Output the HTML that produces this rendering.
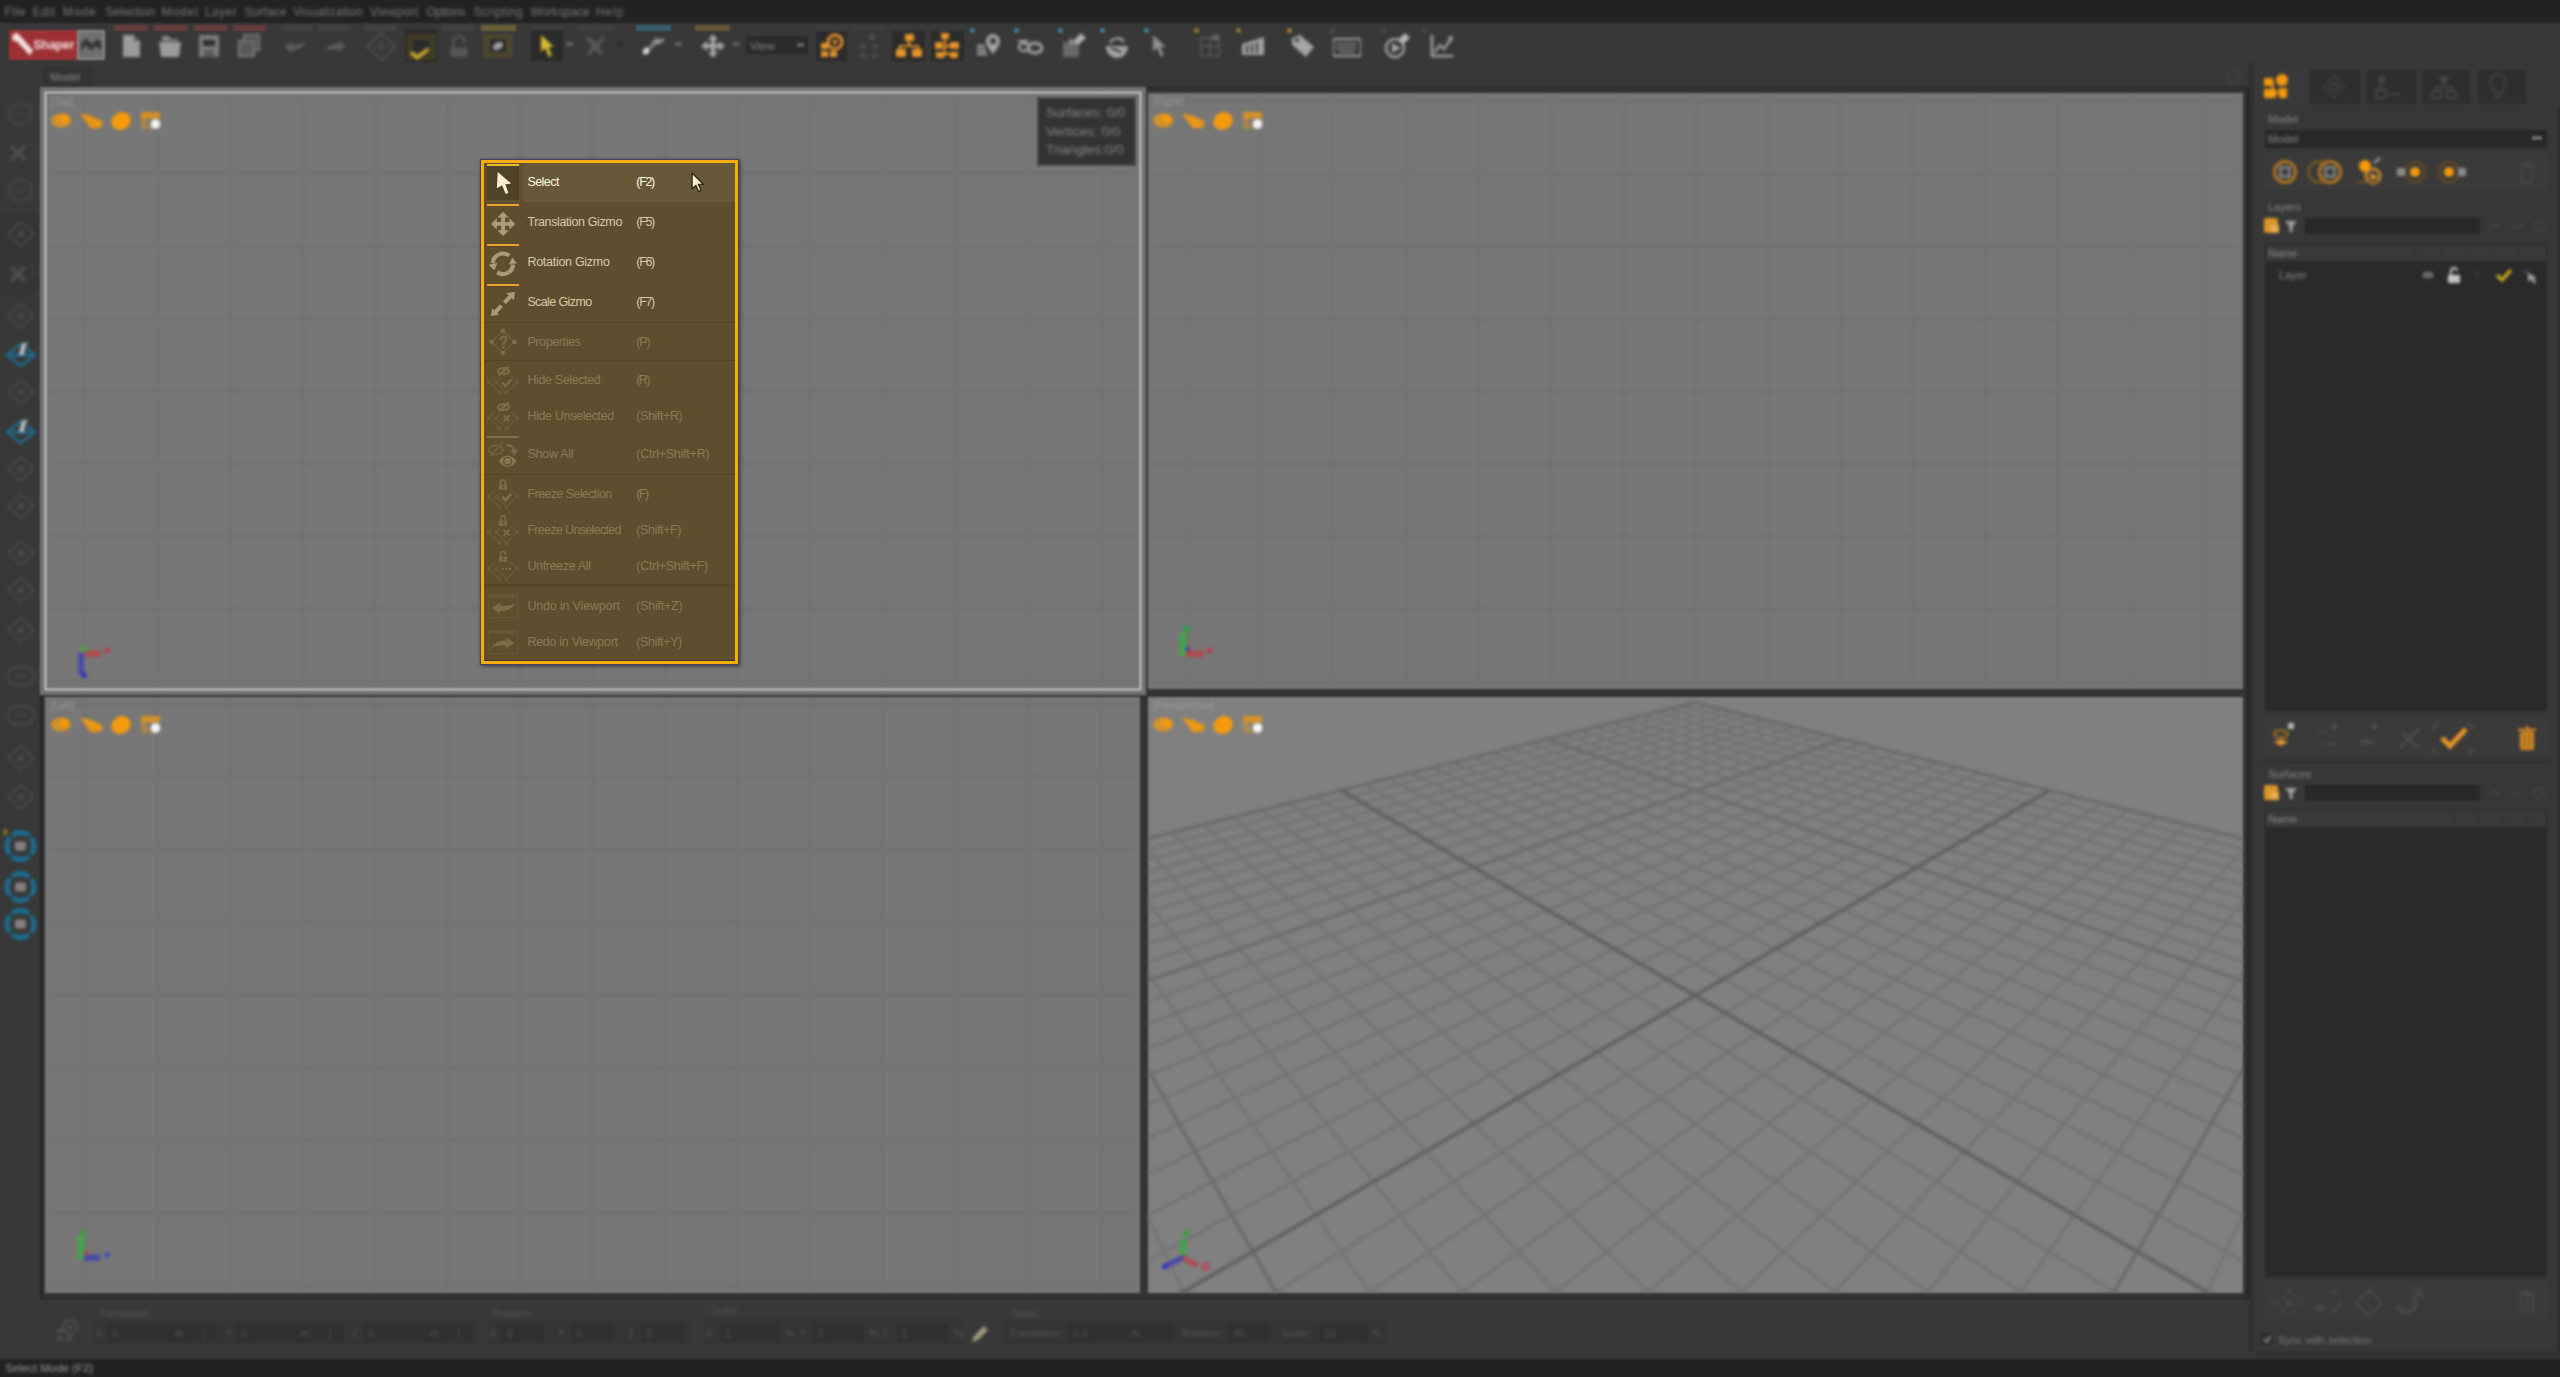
<!DOCTYPE html>
<html><head><meta charset="utf-8"><title>Shaper</title>
<style>
html,body{margin:0;padding:0;background:#383838;overflow:hidden}
body{width:2560px;height:1377px;position:relative;font-family:"Liberation Sans",sans-serif}
.a{position:absolute}
.t{white-space:nowrap}
#bg{position:absolute;left:-40px;top:-40px;width:2640px;height:1457px;background:#383838;filter:blur(1.25px)}
#bg .t{filter:blur(0.8px)}
#bg svg{filter:blur(0.9px)}
#app{position:absolute;left:40px;top:40px;width:2560px;height:1377px}
#fg{position:absolute;left:0;top:0;width:2560px;height:1377px}
</style></head><body>
<div id="bg"><div id="app">
<div class="a" style="left:-40px;top:-40px;width:2640px;height:63px;background:#222222;"></div>
<div class="a" style="left:-40px;top:1359px;width:2640px;height:61px;background:#222222;"></div>
<div class="a t" style="left:4.5px;top:4px;height:16px;line-height:16px;font-size:12px;color:#7a7a7a;letter-spacing:0.5px">File</div>
<div class="a t" style="left:32.6px;top:4px;height:16px;line-height:16px;font-size:12px;color:#7a7a7a;letter-spacing:0.63px">Edit</div>
<div class="a t" style="left:63px;top:4px;height:16px;line-height:16px;font-size:12px;color:#7a7a7a;letter-spacing:0.9px">Mode</div>
<div class="a t" style="left:105.5px;top:4px;height:16px;line-height:16px;font-size:12px;color:#7a7a7a;letter-spacing:0.02px">Selection</div>
<div class="a t" style="left:161.5px;top:4px;height:16px;line-height:16px;font-size:12px;color:#7a7a7a;letter-spacing:0.9px">Model</div>
<div class="a t" style="left:205px;top:4px;height:16px;line-height:16px;font-size:12px;color:#7a7a7a;letter-spacing:0.42px">Layer</div>
<div class="a t" style="left:244.5px;top:4px;height:16px;line-height:16px;font-size:12px;color:#7a7a7a;letter-spacing:0.08px">Surface</div>
<div class="a t" style="left:293px;top:4px;height:16px;line-height:16px;font-size:12px;color:#7a7a7a;letter-spacing:0.21px">Visualization</div>
<div class="a t" style="left:370px;top:4px;height:16px;line-height:16px;font-size:12px;color:#7a7a7a;letter-spacing:0.25px">Viewport</div>
<div class="a t" style="left:426.5px;top:4px;height:16px;line-height:16px;font-size:12px;color:#7a7a7a;letter-spacing:-0.3px">Options</div>
<div class="a t" style="left:473.4px;top:4px;height:16px;line-height:16px;font-size:12px;color:#7a7a7a;letter-spacing:0.31px">Scripting</div>
<div class="a t" style="left:530.5px;top:4px;height:16px;line-height:16px;font-size:12px;color:#7a7a7a;letter-spacing:-0.09px">Workspace</div>
<div class="a t" style="left:596px;top:4px;height:16px;line-height:16px;font-size:12px;color:#7a7a7a;letter-spacing:0.9px">Help</div>
<div class="a t" style="left:5px;top:1359.5px;height:16px;line-height:16px;font-size:11.5px;color:#9a9a9a;">Select Mode (F2)</div>
<div class="a" style="left:9.3px;top:29.7px;width:67.3px;height:30.1px;background:#9e3034;border-radius:2px 0 0 2px"></div>
<div class="a" style="left:76.6px;top:29.7px;width:28px;height:30.1px;background:#8a8a8a;border-radius:0 2px 2px 0"></div>
<div class="a" style="left:78.6px;top:31.7px;width:24px;height:26.1px;background:#707070;"></div>
<div class="a t" style="left:33.6px;top:37.3px;height:16px;line-height:16px;font-size:12.3px;color:#f6e6e6;font-weight:bold;letter-spacing:-0.2px">Shaper</div>
<svg class="a" style="left:9px;top:30px;" width="100" height="32" viewBox="0 0 100 32">
<path d="M3 6 L7 2.5 L11 5.5 L24 20.5 L21 25.5 L8 11.5 L4 10.5 Z" fill="#f4e2e2"/>
<path d="M72 22 L72 14 L77 8 L83 14 L88 9 L92 12 L92 20 L86 16 L82 21 L77 15 Z" fill="#333333"/>
</svg>
<div class="a" style="left:114.3px;top:25px;width:33.4px;height:5.8px;background:#673c3c;"></div>
<div class="a" style="left:153.7px;top:25px;width:33.9px;height:5.8px;background:#673c3c;"></div>
<div class="a" style="left:193.7px;top:25px;width:33.3px;height:5.8px;background:#673c3c;"></div>
<div class="a" style="left:232.5px;top:25px;width:33.9px;height:5.8px;background:#673c3c;"></div>
<div class="a" style="left:280.7px;top:25px;width:31.4px;height:5.8px;background:#424242;"></div>
<div class="a" style="left:318.7px;top:25px;width:32.5px;height:5.8px;background:#424242;"></div>
<div class="a" style="left:363.9px;top:25px;width:33.5px;height:5.8px;background:#424242;"></div>
<div class="a" style="left:441.6px;top:25px;width:32.4px;height:5.8px;background:#424242;"></div>
<div class="a" style="left:480.7px;top:25px;width:35px;height:5.8px;background:#6a6038;"></div>
<div class="a" style="left:532px;top:25px;width:31px;height:5.8px;background:#3e3e3e;"></div>
<div class="a" style="left:578px;top:25px;width:35.8px;height:5.8px;background:#404040;"></div>
<div class="a" style="left:636px;top:25px;width:35.2px;height:5.8px;background:#385d70;"></div>
<div class="a" style="left:695.2px;top:25px;width:35.2px;height:5.8px;background:#67553a;"></div>
<div class="a" style="left:816px;top:25px;width:32px;height:5.8px;background:#3d3d3d;"></div>
<div class="a" style="left:853px;top:25px;width:33px;height:5.8px;background:#3d3d3d;"></div>
<svg class="a" style="left:118px;top:32px;" width="28" height="28" viewBox="0 0 28 28">
<path d="M5 3 H16 L22 9 V25 H5 Z" fill="#9c9c9c"/><path d="M16 3 V9 H22" fill="#5a5a5a"/>
</svg>
<svg class="a" style="left:156px;top:32px;" width="28" height="28" viewBox="0 0 28 28">
<path d="M3 10 H25 L23 25 H5 Z" fill="#9c9c9c"/><path d="M6 4 H13 L15 7 H22 V9 H6 Z" fill="#8a8a8a"/>
</svg>
<svg class="a" style="left:195px;top:32px;" width="28" height="28" viewBox="0 0 28 28">
<path d="M4 3 H24 V25 H4 Z" fill="#7c7c7c"/><rect x="8" y="8" width="12" height="6" fill="#2e2e2e"/><rect x="9" y="18" width="10" height="7" fill="#5a5a5a"/>
</svg>
<svg class="a" style="left:235px;top:32px;" width="28" height="28" viewBox="0 0 28 28">
<rect x="9" y="3" width="15" height="15" fill="#505050" stroke="#707070" stroke-width="2.4"/><rect x="4" y="9" width="15" height="15" fill="#585858" stroke="#747474" stroke-width="2.4"/>
</svg>
<svg class="a" style="left:281px;top:32.4px;" width="28" height="28" viewBox="0 0 28 28">
<path d="M3 15 L11 9.5 V12.5 C16 12.5 21 11.5 25 8.5 C23 15 17 18.5 11 18.5 V21 Z" fill="#5c5c5c"/>
</svg>
<svg class="a" style="left:321px;top:32.4px;" width="28" height="28" viewBox="0 0 28 28">
<path d="M25 14 L17 8.5 V11.5 C12 11.5 7 13.5 3 19.5 C8 17 12 17 17 17.5 V20 Z" fill="#5c5c5c"/>
</svg>
<svg class="a" style="left:364px;top:30px;" width="34" height="34" viewBox="0 0 34 34">
<path d="M17 3 L31 16.5 L17 30 L3 16.5 Z" fill="none" stroke="#4b4b4b" stroke-width="2.4"/><path d="M9 16.5 H25 M17 9 V24" stroke="#484848" stroke-width="2.4"/>
</svg>
<div class="a" style="left:405px;top:29px;width:31.5px;height:32.6px;background:#2b2b2b;"></div>
<div class="a" style="left:406.5px;top:33.7px;width:29.5px;height:26.3px;background:#3f3b27;"></div>
<div class="a" style="left:413.2px;top:40.3px;width:15.7px;height:12.2px;background:#2b2b2b;"></div>
<svg class="a" style="left:405px;top:30px;" width="32" height="32" viewBox="0 0 32 32">
<path d="M6 22.5 L12.2 27.5 L23.4 18.9" fill="none" stroke="#c4a830" stroke-width="3.8"/>
</svg>
<svg class="a" style="left:445px;top:32px;" width="28" height="28" viewBox="0 0 28 28">
<rect x="5.2" y="15.4" width="17.3" height="9.6" fill="#565656"/><path d="M8.5 15 V9.5 A5.5 5.5 0 0 1 19.5 9.5 V12" fill="none" stroke="#565656" stroke-width="2.6"/>
</svg>
<div class="a" style="left:483.2px;top:33.7px;width:29.5px;height:24.3px;background:#4c4630;"></div>
<div class="a" style="left:489.8px;top:39.3px;width:16.2px;height:12.7px;background:#2d2d2d;"></div>
<svg class="a" style="left:484px;top:32px;" width="30" height="28" viewBox="0 0 30 28">
<ellipse cx="14" cy="14" rx="5.5" ry="3.6" fill="#a0a0a0" transform="rotate(-30 14 14)"/>
</svg>
<div class="a" style="left:531px;top:30px;width:32px;height:31px;background:#2b2b2b;"></div>
<svg class="a" style="left:532px;top:32px;" width="28" height="28" viewBox="0 0 28 28">
<path d="M9 3 L9 20 L13 16 L17 25 L20 23.5 L16.5 15 L22 15 Z" fill="#d8bc30"/>
</svg>
<div class="a" style="left:565.7px;top:42.3px;width:7px;height:4px;background:#5a5a5a;"></div>
<svg class="a" style="left:581px;top:32px;" width="28" height="28" viewBox="0 0 28 28">
<path d="M4 6 L8 4 L15 11 L22 4 L24 6 L18 14 L22 22 L20 24 L14 17 L8 24 L6 22 L11 14 Z" fill="#585858"/>
</svg>
<div class="a" style="left:617.3px;top:42.3px;width:7px;height:4px;background:#2d2d2d;"></div>
<svg class="a" style="left:639px;top:32px;" width="28" height="28" viewBox="0 0 28 28">
<path d="M4 22 C3 17 7 14 10 16 C12 18 10 24 4 22 Z" fill="#d8d8d8"/><path d="M10 15 L17 5 L20 7 L13 17 Z" fill="#8a8a8a"/><path d="M16 10 L24 6 L25 9 L18 13 Z" fill="#a0a0a0"/>
</svg>
<div class="a" style="left:674.7px;top:42.3px;width:7px;height:4px;background:#5a5a5a;"></div>
<svg class="a" style="left:698.5px;top:32px;" width="28" height="28" viewBox="0 0 28 28">
<path d="M14 2 L19 8 H16 V12 H20 V9 L26 14 L20 19 V16 H16 V20 H19 L14 26 L9 20 H12 V16 H8 V19 L2 14 L8 9 V12 H12 V8 H9 Z" fill="#a6a6a6"/>
</svg>
<div class="a" style="left:733.4px;top:42.3px;width:7px;height:4px;background:#5a5a5a;"></div>
<div class="a" style="left:745.7px;top:36px;width:62.7px;height:18px;background:#2b2b2b;"></div>
<div class="a t" style="left:750px;top:37.5px;height:16px;line-height:16px;font-size:11.5px;color:#8a8a8a;">View</div>
<div class="a" style="left:796.5px;top:42.5px;width:7px;height:4px;background:#606060;"></div>
<div class="a" style="left:816px;top:31px;width:31px;height:30px;background:#2b2b2b;"></div>
<svg class="a" style="left:817.5px;top:32px;" width="28" height="28" viewBox="0 0 28 28">
<circle cx="17" cy="10" r="7" fill="none" stroke="#e8962a" stroke-width="3"/><path d="M14 8 L20 8 L17 14 Z" fill="#e8962a"/><rect x="3" y="11" width="7" height="6" fill="#e8962a"/><rect x="3" y="19" width="7" height="6" fill="#e8962a"/><rect x="12" y="19" width="7" height="6" fill="#e8962a"/>
</svg>
<svg class="a" style="left:855px;top:32px;" width="28" height="28" viewBox="0 0 28 28">
<rect x="14" y="3" width="6" height="5" fill="#505050"/><rect x="5" y="12" width="6" height="5" fill="#4a4a4a"/><rect x="17" y="12" width="6" height="5" fill="#4a4a4a"/><rect x="5" y="21" width="6" height="5" fill="#4a4a4a"/><rect x="17" y="21" width="6" height="5" fill="#4a4a4a"/>
</svg>
<div class="a" style="left:892px;top:31px;width:33px;height:30px;background:#2b2b2b;"></div>
<svg class="a" style="left:894.5px;top:32px;" width="28" height="28" viewBox="0 0 28 28">
<rect x="10" y="2" width="9" height="7" fill="#e8962a"/><path d="M14 9 V14 M5 18 V14 H23 V18" fill="none" stroke="#e8962a" stroke-width="2"/><rect x="1" y="17" width="10" height="8" fill="#e8962a"/><rect x="17" y="17" width="10" height="8" fill="#e8962a"/>
</svg>
<div class="a" style="left:931px;top:31px;width:33px;height:30px;background:#2b2b2b;"></div>
<svg class="a" style="left:933px;top:32px;" width="28" height="28" viewBox="0 0 28 28">
<rect x="8" y="1" width="8" height="6" fill="#e8962a"/><path d="M12 7 V24 M12 14 H20 M12 22 H20" fill="none" stroke="#e8962a" stroke-width="2"/><rect x="2" y="10" width="8" height="7" fill="#e8962a"/><rect x="17" y="10" width="9" height="7" fill="#e8962a"/><rect x="3" y="20" width="8" height="6" fill="#e8962a"/><rect x="17" y="20" width="8" height="6" fill="#e8962a"/>
</svg>
<div class="a" style="left:969.5px;top:27.5px;width:5px;height:5px;background:#3d7f9c;opacity:0.8"></div>
<div class="a" style="left:1013.5px;top:27.5px;width:5px;height:5px;background:#3d7f9c;opacity:0.8"></div>
<div class="a" style="left:1057.5px;top:27.5px;width:5px;height:5px;background:#3d7f9c;opacity:0.8"></div>
<div class="a" style="left:1099.5px;top:27.5px;width:5px;height:5px;background:#3d7f9c;opacity:0.8"></div>
<div class="a" style="left:1143.5px;top:27.5px;width:5px;height:5px;background:#3d7f9c;opacity:0.8"></div>
<div class="a" style="left:1193.5px;top:27.5px;width:5px;height:5px;background:#8a7a2e;opacity:0.8"></div>
<div class="a" style="left:1235.5px;top:27.5px;width:5px;height:5px;background:#8a7a2e;opacity:0.8"></div>
<div class="a" style="left:1286.5px;top:27.5px;width:5px;height:5px;background:#a87a30;opacity:0.8"></div>
<div class="a" style="left:1329.5px;top:27.5px;width:5px;height:5px;background:#4a4a4a;opacity:0.8"></div>
<div class="a" style="left:1380.5px;top:27.5px;width:5px;height:5px;background:#4a4a4a;opacity:0.8"></div>
<div class="a" style="left:1421.5px;top:27.5px;width:5px;height:5px;background:#4a4a4a;opacity:0.8"></div>
<svg class="a" style="left:975px;top:32px;" width="28" height="28" viewBox="0 0 28 28">
<path d="M18 2 A7 7 0 0 1 25 9 C25 14 18 22 18 22 C18 22 11 14 11 9 A7 7 0 0 1 18 2 Z" fill="#a4a4a4"/><circle cx="18" cy="9" r="3" fill="#373737"/><path d="M2 14 H10 M2 18 H11 M2 22 H12" stroke="#a4a4a4" stroke-width="2.4"/>
</svg>
<svg class="a" style="left:1016px;top:33px;" width="28" height="28" viewBox="0 0 28 28">
<ellipse cx="19" cy="15" rx="7" ry="5" fill="none" stroke="#a4a4a4" stroke-width="3"/><ellipse cx="8" cy="14" rx="5" ry="4" fill="none" stroke="#a4a4a4" stroke-width="2.6"/><path d="M2 8 H12" stroke="#a4a4a4" stroke-width="2"/>
</svg>
<svg class="a" style="left:1060px;top:32px;" width="28" height="28" viewBox="0 0 28 28">
<rect x="3" y="10" width="16" height="15" fill="#6a6a6a"/><path d="M13 9 L21 1 L26 6 L18 13 Z" fill="#b0b0b0"/><path d="M9 5 L15 11 L10 13 Z" fill="#9a9a9a"/>
</svg>
<svg class="a" style="left:1103px;top:33px;" width="28" height="28" viewBox="0 0 28 28">
<path d="M3 13 H25 C25 20 20 25 14 25 C8 25 3 20 3 13 Z" fill="#a4a4a4"/><path d="M7 10 C10 4 18 4 21 9" fill="none" stroke="#a4a4a4" stroke-width="2.5"/><path d="M8 15 L18 19" stroke="#373737" stroke-width="2"/>
</svg>
<svg class="a" style="left:1144px;top:32px;" width="28" height="28" viewBox="0 0 28 28">
<path d="M9 3 L9 20 L13 16 L17 25 L20 23.5 L16.5 15 L22 15 Z" fill="#8e8e8e"/>
</svg>
<svg class="a" style="left:1196px;top:32px;" width="28" height="28" viewBox="0 0 28 28">
<rect x="5" y="6" width="18" height="18" fill="none" stroke="#555" stroke-width="2"/><path d="M5 14 H23 M14 6 V24" stroke="#555" stroke-width="2"/><rect x="16" y="3" width="7" height="5" fill="#6a6a6a"/>
</svg>
<svg class="a" style="left:1239px;top:32px;" width="28" height="28" viewBox="0 0 28 28">
<path d="M3 12 L25 5 V23 H3 Z" fill="#a4a4a4"/><path d="M8 13 V21 M13 12 V21 M18 10 V21" stroke="#373737" stroke-width="2"/>
</svg>
<svg class="a" style="left:1289px;top:32px;" width="28" height="28" viewBox="0 0 28 28">
<path d="M3 6 L11 3 L25 15 L17 25 L3 13 Z" fill="#a4a4a4"/><circle cx="8" cy="8" r="2" fill="#373737"/>
</svg>
<svg class="a" style="left:1333px;top:33px;" width="28" height="28" viewBox="0 0 28 28">
<rect x="0" y="6" width="28" height="17" rx="2" fill="none" stroke="#a4a4a4" stroke-width="2.2"/><path d="M4 11 H24 M4 15 H24 M7 19 H21" stroke="#a4a4a4" stroke-width="2" stroke-dasharray="2.5 1.5"/>
</svg>
<svg class="a" style="left:1383px;top:32px;" width="28" height="28" viewBox="0 0 28 28">
<circle cx="12" cy="16" r="9" fill="none" stroke="#a4a4a4" stroke-width="2.6"/><path d="M9 11 L18 16 L9 21 Z" fill="#a4a4a4"/><path d="M15 8 L22 1 L27 6 L20 12 Z" fill="#b8b8b8"/>
</svg>
<svg class="a" style="left:1427px;top:32px;" width="28" height="28" viewBox="0 0 28 28">
<path d="M5 3 V24 H26" fill="none" stroke="#a4a4a4" stroke-width="2.6"/><path d="M8 20 L13 13 L17 17 L24 7" fill="none" stroke="#a4a4a4" stroke-width="2.2"/><path d="M20 5 L26 4 L25 10 Z" fill="#a4a4a4"/>
</svg>
<div class="a" style="left:42px;top:67px;width:52px;height:21px;background:#333333;"></div>
<div class="a t" style="left:50px;top:68.5px;height:16px;line-height:16px;font-size:11px;color:#8c8c8c;">Model</div>
<svg class="a" style="left:2224px;top:67px;" width="20" height="20" viewBox="0 0 20 20">
<circle cx="10" cy="10" r="6" fill="none" stroke="#414141" stroke-width="2.5"/>
</svg>
<div class="a" style="left:0px;top:214px;width:39px;height:80px;background:#353535;"></div>
<svg class="a" style="left:3px;top:96px;" width="36" height="34" viewBox="0 0 36 34">
<path d="M6 12 L16 6 L28 10 L28 24 L16 29 L6 24 Z" fill="none" stroke="#484848" stroke-width="2"/><path d="M6 18 H28 M12 9 V27 M20 8 V28" stroke="#424242" stroke-width="1.6"/>
</svg>
<svg class="a" style="left:3px;top:173px;" width="36" height="34" viewBox="0 0 36 34">
<path d="M6 12 L16 6 L28 10 L28 24 L16 29 L6 24 Z" fill="none" stroke="#484848" stroke-width="2"/><path d="M6 18 H28 M12 9 V27 M20 8 V28" stroke="#424242" stroke-width="1.6"/>
</svg>
<svg class="a" style="left:3px;top:136px;" width="36" height="34" viewBox="0 0 36 34">
<path d="M8 10 L22 24 M22 10 L8 24" stroke="#4e4e4e" stroke-width="4"/><path d="M25 9 H31 M28 17 H32" stroke="#444" stroke-width="2"/>
</svg>
<svg class="a" style="left:3px;top:257px;" width="36" height="34" viewBox="0 0 36 34">
<path d="M8 10 L22 24 M22 10 L8 24" stroke="#4e4e4e" stroke-width="4"/><path d="M25 9 H31 M28 17 H32" stroke="#444" stroke-width="2"/>
</svg>
<svg class="a" style="left:3px;top:217px;" width="36" height="34" viewBox="0 0 36 34">
<path d="M18 5 L31 17 L18 29 L5 17 Z" fill="none" stroke="#484848" stroke-width="2.2"/><circle cx="18" cy="17" r="3.5" fill="#484848"/>
</svg>
<svg class="a" style="left:3px;top:299px;" width="36" height="34" viewBox="0 0 36 34">
<path d="M18 5 L31 17 L18 29 L5 17 Z" fill="none" stroke="#484848" stroke-width="2.2"/><circle cx="18" cy="17" r="3.5" fill="#484848"/>
</svg>
<svg class="a" style="left:3px;top:375px;" width="36" height="34" viewBox="0 0 36 34">
<path d="M18 5 L31 17 L18 29 L5 17 Z" fill="none" stroke="#484848" stroke-width="2.2"/><circle cx="18" cy="17" r="3.5" fill="#484848"/>
</svg>
<svg class="a" style="left:3px;top:452px;" width="36" height="34" viewBox="0 0 36 34">
<path d="M18 5 L31 17 L18 29 L5 17 Z" fill="none" stroke="#484848" stroke-width="2.2"/><circle cx="18" cy="17" r="3.5" fill="#484848"/>
</svg>
<svg class="a" style="left:3px;top:489px;" width="36" height="34" viewBox="0 0 36 34">
<path d="M18 5 L31 17 L18 29 L5 17 Z" fill="none" stroke="#484848" stroke-width="2.2"/><circle cx="18" cy="17" r="3.5" fill="#484848"/>
</svg>
<svg class="a" style="left:3px;top:536px;" width="36" height="34" viewBox="0 0 36 34">
<path d="M18 5 L31 17 L18 29 L5 17 Z" fill="none" stroke="#484848" stroke-width="2.2"/><circle cx="18" cy="17" r="3.5" fill="#484848"/>
</svg>
<svg class="a" style="left:3px;top:573px;" width="36" height="34" viewBox="0 0 36 34">
<path d="M18 5 L31 17 L18 29 L5 17 Z" fill="none" stroke="#484848" stroke-width="2.2"/><circle cx="18" cy="17" r="3.5" fill="#484848"/>
</svg>
<svg class="a" style="left:3px;top:613px;" width="36" height="34" viewBox="0 0 36 34">
<path d="M18 5 L31 17 L18 29 L5 17 Z" fill="none" stroke="#484848" stroke-width="2.2"/><circle cx="18" cy="17" r="3.5" fill="#484848"/>
</svg>
<svg class="a" style="left:3px;top:741px;" width="36" height="34" viewBox="0 0 36 34">
<path d="M18 5 L31 17 L18 29 L5 17 Z" fill="none" stroke="#484848" stroke-width="2.2"/><circle cx="18" cy="17" r="3.5" fill="#484848"/>
</svg>
<svg class="a" style="left:3px;top:780px;" width="36" height="34" viewBox="0 0 36 34">
<path d="M18 5 L31 17 L18 29 L5 17 Z" fill="none" stroke="#484848" stroke-width="2.2"/><circle cx="18" cy="17" r="3.5" fill="#484848"/>
</svg>
<svg class="a" style="left:3px;top:659px;" width="36" height="34" viewBox="0 0 36 34">
<path d="M3 17 L10 8 H26 L33 17 L26 26 H10 Z" fill="none" stroke="#484848" stroke-width="2.2"/><path d="M12 17 H24" stroke="#484848" stroke-width="2"/>
</svg>
<svg class="a" style="left:3px;top:698px;" width="36" height="34" viewBox="0 0 36 34">
<path d="M3 17 L10 8 H26 L33 17 L26 26 H10 Z" fill="none" stroke="#484848" stroke-width="2.2"/><path d="M12 17 H24" stroke="#484848" stroke-width="2"/>
</svg>
<svg class="a" style="left:3px;top:338px;" width="36" height="34" viewBox="0 0 36 34">
<path d="M18 6 L32 17 L18 28 L4 17 Z" fill="none" stroke="#1f6f92" stroke-width="2.4"/><path d="M8 17 H28" stroke="#1f6f92" stroke-width="3"/><path d="M16 17 L19 6 L25 4 L22 9 L21 17 Z" fill="#c4c4c4"/>
</svg>
<svg class="a" style="left:3px;top:415px;" width="36" height="34" viewBox="0 0 36 34">
<path d="M18 6 L32 17 L18 28 L4 17 Z" fill="none" stroke="#1f6f92" stroke-width="2.4"/><path d="M8 17 H28" stroke="#1f6f92" stroke-width="3"/><path d="M16 17 L19 6 L25 4 L22 9 L21 17 Z" fill="#c4c4c4"/>
</svg>
<svg class="a" style="left:3px;top:829px;" width="36" height="34" viewBox="0 0 36 34">
<circle cx="17.5" cy="17" r="13.5" fill="none" stroke="#1c6e92" stroke-width="4.8" stroke-dasharray="18.4 2.8" stroke-dashoffset="9.2"/><rect x="12" y="12.5" width="11" height="9" rx="2" fill="#828282"/>
</svg>
<svg class="a" style="left:3px;top:869.5px;" width="36" height="34" viewBox="0 0 36 34">
<circle cx="17.5" cy="17" r="13.5" fill="none" stroke="#1c6e92" stroke-width="4.8" stroke-dasharray="18.4 2.8" stroke-dashoffset="9.2"/><rect x="12" y="12.5" width="11" height="9" rx="2" fill="#828282"/>
</svg>
<svg class="a" style="left:3px;top:907px;" width="36" height="34" viewBox="0 0 36 34">
<circle cx="17.5" cy="17" r="13.5" fill="none" stroke="#1c6e92" stroke-width="4.8" stroke-dasharray="18.4 2.8" stroke-dashoffset="9.2"/><rect x="12" y="12.5" width="11" height="9" rx="2" fill="#828282"/>
</svg>
<div class="a" style="left:3px;top:829px;width:5px;height:6px;background:#6e6420;"></div>
<div class="a" style="left:40px;top:86.7px;width:2208.7px;height:1212.6px;background:#222222;"></div>
<div class="a" style="left:41.5px;top:88.2px;width:2205.7px;height:1209.6px;background:#333333;"></div>
<div class="a" style="left:39.5px;top:86.5px;width:1106.5px;height:608.7px;background:#757575;"></div>
<div class="a" style="left:45px;top:92px;width:1096px;height:598px;background:#ffffff;"></div>
<div class="a" style="left:46px;top:93px;width:1094px;height:596px;background:#777777;"></div>
<div class="a" style="left:1147.5px;top:92.5px;width:1095.3px;height:596.9px;background:#777777;"></div>
<div class="a" style="left:45.3px;top:696.5px;width:1095.1px;height:596.3px;background:#777777;"></div>
<div class="a" style="left:1147.5px;top:696.5px;width:1095.3px;height:596.3px;background:#808080;"></div>
<svg class="a" style="left:46px;top:93px;" width="1094" height="596" viewBox="0 0 1094 596">
<path d="M547.0 3 V593 M619.6 3 V593 M474.4 3 V593 M692.2 3 V593 M401.8 3 V593 M764.8 3 V593 M329.2 3 V593 M837.4 3 V593 M256.6 3 V593 M910.0 3 V593 M184.0 3 V593 M982.6 3 V593 M111.4 3 V593 M1055.2 3 V593 M38.8 3 V593 M3 298.0 H1091 M3 370.6 H1091 M3 225.4 H1091 M3 443.2 H1091 M3 152.8 H1091 M3 515.8 H1091 M3 80.2 H1091 M3 588.4 H1091 M3 7.6 H1091 " stroke="#737373" stroke-width="4" fill="none"/>
</svg>
<svg class="a" style="left:1147.5px;top:92.5px;" width="1095.3" height="596.9" viewBox="0 0 1095.3 596.9">
<path d="M547.7 3 V593.9 M620.2 3 V593.9 M475.1 3 V593.9 M692.9 3 V593.9 M402.5 3 V593.9 M765.5 3 V593.9 M329.9 3 V593.9 M838.1 3 V593.9 M257.2 3 V593.9 M910.7 3 V593.9 M184.7 3 V593.9 M983.2 3 V593.9 M112.1 3 V593.9 M1055.8 3 V593.9 M39.5 3 V593.9 M3 298.4 H1092.3 M3 371.0 H1092.3 M3 225.9 H1092.3 M3 443.6 H1092.3 M3 153.2 H1092.3 M3 516.2 H1092.3 M3 80.7 H1092.3 M3 588.8 H1092.3 M3 8.1 H1092.3 " stroke="#737373" stroke-width="4" fill="none"/>
</svg>
<svg class="a" style="left:45.3px;top:696.5px;" width="1095.1" height="596.3" viewBox="0 0 1095.1 596.3">
<path d="M547.6 3 V593.3 M620.2 3 V593.3 M474.9 3 V593.3 M692.8 3 V593.3 M402.4 3 V593.3 M765.4 3 V593.3 M329.8 3 V593.3 M838.0 3 V593.3 M257.2 3 V593.3 M910.6 3 V593.3 M184.6 3 V593.3 M983.2 3 V593.3 M112.0 3 V593.3 M1055.8 3 V593.3 M39.4 3 V593.3 M3 298.1 H1092.1 M3 370.8 H1092.1 M3 225.5 H1092.1 M3 443.3 H1092.1 M3 153.0 H1092.1 M3 516.0 H1092.1 M3 80.4 H1092.1 M3 588.5 H1092.1 M3 7.8 H1092.1 " stroke="#737373" stroke-width="4" fill="none"/>
</svg>
<svg class="a" style="left:1147.5px;top:696.5px;overflow:hidden" width="1095.3" height="596.3" viewBox="0 0 1095.3 596.3">
<path d="M-2297.9 4060.2 L-566.3 282.0 M3392.1 4060.2 L1660.5 282.0 M-1806.2 4060.2 L-503.9 266.5 M2900.4 4060.2 L1598.1 266.5 M-1314.6 4060.2 L-445.3 251.9 M2408.8 4060.2 L1539.5 251.9 M-822.9 4060.2 L-390.1 238.2 M1917.1 4060.2 L1484.3 238.2 M-331.2 4060.2 L-338.0 225.3 M1425.4 4060.2 L1432.2 225.3 M160.5 4060.2 L-288.9 213.1 M933.7 4060.2 L1383.1 213.1 M652.2 4060.2 L-242.4 201.5 M442.0 4060.2 L1336.6 201.5 M1143.8 4060.2 L-198.3 190.6 M-49.6 4060.2 L1292.5 190.6 M1635.5 4060.2 L-156.5 180.2 M-541.3 4060.2 L1250.7 180.2 M2618.9 4060.2 L-79.1 161.0 M-1524.7 4060.2 L1173.3 161.0 M3110.5 4060.2 L-43.1 152.0 M-2016.3 4060.2 L1137.3 152.0 M3602.2 4060.2 L-8.8 143.5 M-2508.0 4060.2 L1103.0 143.5 M3624.0 3607.0 L24.0 135.4 M-2529.8 3607.0 L1070.2 135.4 M3188.5 2847.4 L55.3 127.6 M-2094.3 2847.4 L1038.9 127.6 M2897.4 2339.8 L85.2 120.2 M-1803.2 2339.8 L1009.0 120.2 M2689.1 1976.5 L113.8 113.1 M-1594.9 1976.5 L980.4 113.1 M2532.7 1703.7 L141.3 106.3 M-1438.5 1703.7 L952.9 106.3 M2411.0 1491.3 L167.7 99.7 M-1316.8 1491.3 L926.5 99.7 M2233.7 1182.0 L217.2 87.4 M-1139.5 1182.0 L877.0 87.4 M2167.1 1065.9 L240.6 81.6 M-1072.9 1065.9 L853.6 81.6 M2110.8 967.7 L263.1 76.0 M-1016.6 967.7 L831.1 76.0 M2062.5 883.4 L284.8 70.7 M-968.3 883.4 L809.4 70.7 M2020.6 810.4 L305.6 65.5 M-926.4 810.4 L788.6 65.5 M1984.0 746.5 L325.7 60.5 M-889.8 746.5 L768.5 60.5 M1951.6 690.0 L345.2 55.7 M-857.4 690.0 L749.0 55.7 M1922.8 639.9 L363.9 51.0 M-828.6 639.9 L730.3 51.0 M1897.1 595.0 L382.0 46.5 M-802.9 595.0 L712.2 46.5 M1853.0 518.0 L416.5 38.0 M-758.8 518.0 L677.7 38.0 M1833.9 484.8 L432.8 33.9 M-739.7 484.8 L661.4 33.9 M1816.5 454.4 L448.7 29.9 M-722.3 454.4 L645.5 29.9 M1800.5 426.6 L464.1 26.1 M-706.3 426.6 L630.1 26.1 M1785.9 401.0 L479.0 22.4 M-691.7 401.0 L615.2 22.4 M1772.3 377.3 L493.4 18.8 M-678.1 377.3 L600.8 18.8 M1759.8 355.4 L507.4 15.4 M-665.6 355.4 L586.8 15.4 M1748.1 335.1 L521.1 12.0 M-653.9 335.1 L573.1 12.0 M1737.3 316.2 L534.3 8.7 M-643.1 316.2 L559.9 8.7 " stroke="#747474" stroke-width="3.2" fill="none"/>
<path d="M-2789.6 4060.2 L-632.9 298.5 M3883.8 4060.2 L1727.1 298.5 M2127.2 4060.2 L-116.8 170.4 M-1033.0 4060.2 L1211.0 170.4 M1873.9 554.6 L399.5 42.2 M-779.7 554.6 L694.7 42.2 M1727.1 298.5 L547.1 5.5 M-632.9 298.5 L547.1 5.5 " stroke="#6c6c6c" stroke-width="3.6" fill="none"/>
<path d="M2313.5 1321.2 L192.9 93.4 M-1219.3 1321.2 L901.3 93.4 " stroke="#616161" stroke-width="3.8" fill="none"/>
</svg>
<div class="a t" style="left:51px;top:93px;height:16px;line-height:16px;font-size:10.5px;color:#9a9a9a;">[Top]</div>
<div class="a t" style="left:1153px;top:93px;height:16px;line-height:16px;font-size:10.5px;color:#9a9a9a;">[Right]</div>
<div class="a t" style="left:51px;top:697px;height:16px;line-height:16px;font-size:10.5px;color:#9a9a9a;">[Left]</div>
<div class="a t" style="left:1153px;top:697px;height:16px;line-height:16px;font-size:10.5px;color:#9a9a9a;">[Perspective]</div>
<svg class="a" style="left:49px;top:107.5px;" width="120" height="26" viewBox="0 0 120 26">
<ellipse cx="12" cy="12.5" rx="10" ry="7" fill="#f59a0c" opacity="0.75"/><ellipse cx="16" cy="10.5" rx="4" ry="4.6" fill="#f59a0c" transform="rotate(-25 16 10.5)"/>
<path d="M31 5.5 L41 7.5 L54 13.5 L52 19.5 L42 20.5 L37 14 Z" fill="#f59a0c" opacity="0.9"/>
<ellipse cx="72" cy="13" rx="10" ry="8.6" fill="#f59a0c" transform="rotate(-25 72 13)"/>
<rect x="92" y="4" width="19" height="6.5" fill="#f59a0c" opacity="0.75"/><rect x="92" y="10" width="6" height="11" fill="#f59a0c" opacity="0.4"/><rect x="98" y="17" width="6" height="4" fill="#f59a0c" opacity="0.3"/>
<circle cx="106.5" cy="16" r="4.8" fill="#f6f6f6"/>
</svg>
<svg class="a" style="left:1151px;top:107.5px;" width="120" height="26" viewBox="0 0 120 26">
<ellipse cx="12" cy="12.5" rx="10" ry="7" fill="#f59a0c" opacity="0.75"/><ellipse cx="16" cy="10.5" rx="4" ry="4.6" fill="#f59a0c" transform="rotate(-25 16 10.5)"/>
<path d="M31 5.5 L41 7.5 L54 13.5 L52 19.5 L42 20.5 L37 14 Z" fill="#f59a0c" opacity="0.9"/>
<ellipse cx="72" cy="13" rx="10" ry="8.6" fill="#f59a0c" transform="rotate(-25 72 13)"/>
<rect x="92" y="4" width="19" height="6.5" fill="#f59a0c" opacity="0.75"/><rect x="92" y="10" width="6" height="11" fill="#f59a0c" opacity="0.4"/><rect x="98" y="17" width="6" height="4" fill="#f59a0c" opacity="0.3"/>
<circle cx="106.5" cy="16" r="4.8" fill="#f6f6f6"/>
</svg>
<svg class="a" style="left:49px;top:711.5px;" width="120" height="26" viewBox="0 0 120 26">
<ellipse cx="12" cy="12.5" rx="10" ry="7" fill="#f59a0c" opacity="0.75"/><ellipse cx="16" cy="10.5" rx="4" ry="4.6" fill="#f59a0c" transform="rotate(-25 16 10.5)"/>
<path d="M31 5.5 L41 7.5 L54 13.5 L52 19.5 L42 20.5 L37 14 Z" fill="#f59a0c" opacity="0.9"/>
<ellipse cx="72" cy="13" rx="10" ry="8.6" fill="#f59a0c" transform="rotate(-25 72 13)"/>
<rect x="92" y="4" width="19" height="6.5" fill="#f59a0c" opacity="0.75"/><rect x="92" y="10" width="6" height="11" fill="#f59a0c" opacity="0.4"/><rect x="98" y="17" width="6" height="4" fill="#f59a0c" opacity="0.3"/>
<circle cx="106.5" cy="16" r="4.8" fill="#f6f6f6"/>
</svg>
<svg class="a" style="left:1151px;top:711.5px;" width="120" height="26" viewBox="0 0 120 26">
<ellipse cx="12" cy="12.5" rx="10" ry="7" fill="#f59a0c" opacity="0.75"/><ellipse cx="16" cy="10.5" rx="4" ry="4.6" fill="#f59a0c" transform="rotate(-25 16 10.5)"/>
<path d="M31 5.5 L41 7.5 L54 13.5 L52 19.5 L42 20.5 L37 14 Z" fill="#f59a0c" opacity="0.9"/>
<ellipse cx="72" cy="13" rx="10" ry="8.6" fill="#f59a0c" transform="rotate(-25 72 13)"/>
<rect x="92" y="4" width="19" height="6.5" fill="#f59a0c" opacity="0.75"/><rect x="92" y="10" width="6" height="11" fill="#f59a0c" opacity="0.4"/><rect x="98" y="17" width="6" height="4" fill="#f59a0c" opacity="0.3"/>
<circle cx="106.5" cy="16" r="4.8" fill="#f6f6f6"/>
</svg>
<div class="a" style="left:1037px;top:97px;width:99px;height:69px;background:#484848;"></div>
<div class="a" style="left:1039px;top:99px;width:95px;height:65px;background:#333333;"></div>
<div class="a t" style="left:1046px;top:105px;height:16px;line-height:16px;font-size:13.5px;color:#868686;">Surfaces: 0/0</div>
<div class="a t" style="left:1046px;top:123.5px;height:16px;line-height:16px;font-size:13.5px;color:#868686;">Vertices: 0/0</div>
<div class="a t" style="left:1046px;top:141.5px;height:16px;line-height:16px;font-size:13.5px;color:#868686;">Triangles:0/0</div>
<svg class="a" style="left:70px;top:640px;" width="50" height="45" viewBox="0 0 50 45">
<rect x="8" y="13" width="6" height="21" fill="#4a4aa8"/><rect x="14" y="10.5" width="17" height="6.5" fill="#b04a50"/>
<circle cx="14" cy="9" r="3.2" fill="#45a34d"/><circle cx="37.5" cy="10.5" r="2.8" fill="#c03a50"/><circle cx="13.8" cy="35" r="3" fill="#3a3ab8"/>
</svg>
<svg class="a" style="left:1170px;top:620px;" width="50" height="45" viewBox="0 0 50 45">
<rect x="9.5" y="13" width="7" height="23" fill="#45a34d"/><rect x="16" y="30.5" width="18" height="6.5" fill="#b04a50"/>
<circle cx="16.5" cy="9" r="3.2" fill="#35a045"/><circle cx="39.5" cy="30.5" r="2.8" fill="#c03a50"/><circle cx="17.5" cy="29" r="2.2" fill="#4040b0"/>
</svg>
<svg class="a" style="left:70px;top:1225px;" width="50" height="45" viewBox="0 0 50 45">
<rect x="7.5" y="11" width="7" height="23" fill="#45a34d"/><rect x="14" y="29.5" width="16" height="6.5" fill="#4a4aa8"/>
<circle cx="13" cy="7.5" r="3" fill="#35a045"/><circle cx="37" cy="30" r="2.8" fill="#3a50c0"/><circle cx="15.5" cy="28" r="2.2" fill="#c03a50"/>
</svg>
<svg class="a" style="left:1155px;top:1225px;" width="60" height="50" viewBox="0 0 60 50">
<path d="M28.2 32 V14.5" stroke="#45a34d" stroke-width="6.5"/><path d="M28 32.5 L11 40.8" stroke="#4a4aa8" stroke-width="5.4" stroke-linecap="round"/><path d="M28 32.5 L42.5 40.8" stroke="#b04a50" stroke-width="5.4"/>
<circle cx="31.3" cy="8" r="3.2" fill="#35a045"/><circle cx="10" cy="41.5" r="3" fill="#3040c0"/><circle cx="50.5" cy="41.6" r="3" fill="none" stroke="#c03a50" stroke-width="2"/>
</svg>
<svg class="a" style="left:54px;top:1316px;" width="28" height="28" viewBox="0 0 28 28">
<circle cx="16" cy="11" r="7" fill="none" stroke="#4c4c4c" stroke-width="2.4"/><path d="M12 9 H20 L16 15 Z" fill="#4c4c4c"/><rect x="3" y="12" width="6" height="5" fill="#4c4c4c"/><rect x="3" y="20" width="6" height="5" fill="#4c4c4c"/><rect x="12" y="20" width="6" height="5" fill="#4c4c4c"/>
</svg>
<div class="a t" style="left:98px;top:1305px;height:16px;line-height:16px;font-size:10.5px;color:#565656;">Translation</div>
<div class="a" style="left:93px;top:1321px;width:383px;height:24px;background:#343434;"></div>
<div class="a t" style="left:96px;top:1325px;height:16px;line-height:16px;font-size:10.5px;color:#565656;">X</div>
<div class="a" style="left:107px;top:1324px;width:110px;height:18px;background:#303030;"></div>
<div class="a t" style="left:112px;top:1325px;height:16px;line-height:16px;font-size:10.5px;color:#565656;">0</div>
<div class="a t" style="left:175px;top:1325px;height:16px;line-height:16px;font-size:10.5px;color:#565656;">m</div>
<div class="a" style="left:203px;top:1326px;width:2px;height:14px;background:#3a3a3a;"></div>
<div class="a t" style="left:226px;top:1325px;height:16px;line-height:16px;font-size:10.5px;color:#565656;">Y</div>
<div class="a" style="left:236px;top:1324px;width:107px;height:18px;background:#303030;"></div>
<div class="a t" style="left:241px;top:1325px;height:16px;line-height:16px;font-size:10.5px;color:#565656;">0</div>
<div class="a t" style="left:301px;top:1325px;height:16px;line-height:16px;font-size:10.5px;color:#565656;">m</div>
<div class="a" style="left:329px;top:1326px;width:2px;height:14px;background:#3a3a3a;"></div>
<div class="a t" style="left:352px;top:1325px;height:16px;line-height:16px;font-size:10.5px;color:#565656;">Z</div>
<div class="a" style="left:363px;top:1324px;width:109px;height:18px;background:#303030;"></div>
<div class="a t" style="left:368px;top:1325px;height:16px;line-height:16px;font-size:10.5px;color:#565656;">0</div>
<div class="a t" style="left:430px;top:1325px;height:16px;line-height:16px;font-size:10.5px;color:#565656;">m</div>
<div class="a" style="left:458px;top:1326px;width:2px;height:14px;background:#3a3a3a;"></div>
<div class="a t" style="left:492px;top:1305px;height:16px;line-height:16px;font-size:10.5px;color:#565656;">Rotation</div>
<div class="a" style="left:487px;top:1321px;width:203px;height:24px;background:#343434;"></div>
<div class="a t" style="left:490px;top:1325px;height:16px;line-height:16px;font-size:10.5px;color:#565656;">X</div>
<div class="a" style="left:502px;top:1324px;width:41px;height:18px;background:#303030;"></div>
<div class="a t" style="left:507px;top:1325px;height:16px;line-height:16px;font-size:10.5px;color:#565656;">0</div>
<div class="a t" style="left:558px;top:1325px;height:16px;line-height:16px;font-size:10.5px;color:#565656;">Y</div>
<div class="a" style="left:571px;top:1324px;width:42px;height:18px;background:#303030;"></div>
<div class="a t" style="left:576px;top:1325px;height:16px;line-height:16px;font-size:10.5px;color:#565656;">0</div>
<div class="a t" style="left:628px;top:1325px;height:16px;line-height:16px;font-size:10.5px;color:#565656;">Z</div>
<div class="a" style="left:641px;top:1324px;width:43px;height:18px;background:#303030;"></div>
<div class="a t" style="left:646px;top:1325px;height:16px;line-height:16px;font-size:10.5px;color:#565656;">0</div>
<div class="a t" style="left:711px;top:1301.5px;height:16px;line-height:16px;font-size:10.5px;color:#565656;">Scale</div>
<div class="a" style="left:703px;top:1318px;width:259px;height:27px;background:#343434;"></div>
<div class="a t" style="left:706px;top:1325px;height:16px;line-height:16px;font-size:10.5px;color:#565656;">X</div>
<div class="a" style="left:720px;top:1324px;width:59px;height:18px;background:#303030;"></div>
<div class="a t" style="left:725px;top:1325px;height:16px;line-height:16px;font-size:10.5px;color:#565656;">1</div>
<div class="a t" style="left:785px;top:1325px;height:16px;line-height:16px;font-size:10.5px;color:#565656;">%</div>
<div class="a t" style="left:799px;top:1325px;height:16px;line-height:16px;font-size:10.5px;color:#565656;">Y</div>
<div class="a" style="left:813px;top:1324px;width:50px;height:18px;background:#303030;"></div>
<div class="a t" style="left:818px;top:1325px;height:16px;line-height:16px;font-size:10.5px;color:#565656;">1</div>
<div class="a t" style="left:869px;top:1325px;height:16px;line-height:16px;font-size:10.5px;color:#565656;">%</div>
<div class="a t" style="left:882px;top:1325px;height:16px;line-height:16px;font-size:10.5px;color:#565656;">Z</div>
<div class="a" style="left:897px;top:1324px;width:51px;height:18px;background:#303030;"></div>
<div class="a t" style="left:902px;top:1325px;height:16px;line-height:16px;font-size:10.5px;color:#565656;">1</div>
<div class="a t" style="left:954px;top:1325px;height:16px;line-height:16px;font-size:10.5px;color:#565656;">%</div>
<svg class="a" style="left:968px;top:1322px;" width="24" height="24" viewBox="0 0 24 24">
<path d="M4 20 L6 14 L16 4 L20 8 L10 18 Z" fill="#a09880"/>
</svg>
<div class="a t" style="left:1012px;top:1305px;height:16px;line-height:16px;font-size:10.5px;color:#565656;">Steps</div>
<div class="a" style="left:1004px;top:1321px;width:382px;height:24px;background:#343434;"></div>
<div class="a t" style="left:1009px;top:1325px;height:16px;line-height:16px;font-size:10.5px;color:#565656;">Translation:</div>
<div class="a" style="left:1068px;top:1324px;width:105px;height:18px;background:#303030;"></div>
<div class="a t" style="left:1073px;top:1325px;height:16px;line-height:16px;font-size:10.5px;color:#565656;">0.1</div>
<div class="a t" style="left:1131px;top:1325px;height:16px;line-height:16px;font-size:10.5px;color:#565656;">m</div>
<div class="a t" style="left:1181px;top:1325px;height:16px;line-height:16px;font-size:10.5px;color:#565656;">Rotation:</div>
<div class="a" style="left:1229px;top:1324px;width:40px;height:18px;background:#303030;"></div>
<div class="a t" style="left:1234px;top:1325px;height:16px;line-height:16px;font-size:10.5px;color:#565656;">45</div>
<div class="a t" style="left:1282px;top:1325px;height:16px;line-height:16px;font-size:10.5px;color:#565656;">Scale:</div>
<div class="a" style="left:1319px;top:1324px;width:48px;height:18px;background:#303030;"></div>
<div class="a t" style="left:1324px;top:1325px;height:16px;line-height:16px;font-size:10.5px;color:#565656;">10</div>
<div class="a t" style="left:1372px;top:1325px;height:16px;line-height:16px;font-size:10.5px;color:#565656;">%</div>
<div class="a" style="left:2249px;top:62px;width:5px;height:1290px;background:#303030;"></div>
<div class="a" style="left:2256px;top:102px;width:301.5px;height:1249px;background:#373737;"></div>
<div class="a" style="left:2557.5px;top:106px;width:42.5px;height:1246px;background:#2b2b2b;"></div>
<div class="a" style="left:2256px;top:1351px;width:344px;height:7px;background:#323232;"></div>
<div class="a" style="left:2256px;top:69px;width:51px;height:36px;background:#393939;"></div>
<div class="a" style="left:2310px;top:70px;width:50px;height:34px;background:#2e2e2e;"></div>
<div class="a" style="left:2367px;top:70px;width:49px;height:34px;background:#2e2e2e;"></div>
<div class="a" style="left:2422px;top:70px;width:48px;height:34px;background:#2e2e2e;"></div>
<div class="a" style="left:2478px;top:70px;width:48px;height:34px;background:#2e2e2e;"></div>
<svg class="a" style="left:2262px;top:72px;" width="30" height="30" viewBox="0 0 30 30">
<rect x="2" y="6" width="9" height="8" rx="1" fill="#f59a0c"/><circle cx="20" cy="8" r="6" fill="#f59a0c"/><rect x="2" y="17" width="12" height="9" rx="1" fill="#f59a0c"/><rect x="17" y="16" width="8" height="10" rx="1" fill="#f59a0c"/><rect x="9" y="9" width="3" height="12" fill="#f59a0c" opacity="0.7"/><rect x="10" y="19" width="10" height="3" fill="#f59a0c" opacity="0.7"/>
</svg>
<svg class="a" style="left:2319px;top:73px;" width="30" height="30" viewBox="0 0 30 30">
<path d="M15 3 L26 14 L15 25 L4 14 Z" fill="none" stroke="#474747" stroke-width="2" stroke-dasharray="3 2"/><circle cx="15" cy="14" r="4" fill="none" stroke="#474747" stroke-width="2"/>
</svg>
<svg class="a" style="left:2373px;top:73px;" width="30" height="30" viewBox="0 0 30 30">
<rect x="5" y="3" width="7" height="6" fill="#474747"/><path d="M8 9 V18" stroke="#474747" stroke-width="2"/><rect x="3" y="17" width="10" height="8" fill="none" stroke="#474747" stroke-width="2"/><path d="M17 21 H27" stroke="#474747" stroke-width="2.5"/>
</svg>
<svg class="a" style="left:2429px;top:73px;" width="30" height="30" viewBox="0 0 30 30">
<rect x="11" y="3" width="8" height="6" fill="#474747"/><path d="M15 9 V14 M7 18 V14 H23 V18" fill="none" stroke="#474747" stroke-width="2"/><rect x="3" y="18" width="9" height="7" fill="none" stroke="#474747" stroke-width="2"/><rect x="18" y="18" width="9" height="7" fill="none" stroke="#474747" stroke-width="2"/>
</svg>
<svg class="a" style="left:2483px;top:71px;" width="30" height="32" viewBox="0 0 30 32">
<path d="M15 3 A8 8 0 0 1 20 17 V21 H10 V17 A8 8 0 0 1 15 3 Z" fill="none" stroke="#424242" stroke-width="2"/><path d="M11 24 H19 M12 27 H18" stroke="#424242" stroke-width="2"/>
</svg>
<div class="a t" style="left:2268px;top:110.5px;height:16px;line-height:16px;font-size:11px;color:#8a8a8a;">Model</div>
<div class="a" style="left:2265px;top:130px;width:282px;height:18px;background:#282828;"></div>
<div class="a t" style="left:2268px;top:131px;height:16px;line-height:16px;font-size:11px;color:#8a8a8a;">Model</div>
<div class="a" style="left:2532px;top:136px;width:10px;height:4px;background:#6a6a6a;"></div>
<div class="a" style="left:2264px;top:152px;width:284px;height:38px;background:#3a3a3a;"></div>
<svg class="a" style="left:2266px;top:156px;" width="282" height="34" viewBox="0 0 282 34">
<circle cx="19" cy="16" r="10.5" fill="none" stroke="#b57a22" stroke-width="3"/><rect x="14.5" y="11.5" width="9" height="9" fill="none" stroke="#9a9a9a" stroke-width="2"/>
<circle cx="53" cy="16" r="10.5" fill="none" stroke="#6e5326" stroke-width="3"/><circle cx="64" cy="16" r="10.5" fill="#3a3a3a" stroke="#b57a22" stroke-width="3"/><rect x="59.5" y="11.5" width="9" height="9" fill="none" stroke="#9a9a9a" stroke-width="2"/>
<circle cx="99" cy="10" r="6" fill="#f59a0c"/><circle cx="107" cy="20" r="7" fill="none" stroke="#c8882a" stroke-width="3"/><path d="M104 17 L112 21 L105 24 Z" fill="#e8a030"/><path d="M108 7 L114 2" stroke="#9a9a9a" stroke-width="2.5"/><path d="M90 26 H114" stroke="#80602a" stroke-width="1.6"/>
<circle cx="149" cy="16" r="10" fill="none" stroke="#6a4e22" stroke-width="2"/><circle cx="149" cy="16" r="5" fill="#f59a0c"/><path d="M131 12 H139 V20 H131 Z" fill="#8e8e8e"/>
<circle cx="183" cy="16" r="10" fill="none" stroke="#6a4e22" stroke-width="2"/><circle cx="183" cy="16" r="5" fill="#f59a0c"/><path d="M192 12 H200 V20 H192 Z" fill="#8e8e8e"/>
<path d="M254 8 H268 M256 11 H266 V26 H256 Z M261 5 V8" fill="none" stroke="#484848" stroke-width="2"/>
</svg>
<div class="a t" style="left:2268px;top:199px;height:16px;line-height:16px;font-size:11px;color:#8a8a8a;">Layers</div>
<svg class="a" style="left:2262px;top:216px;" width="40" height="20" viewBox="0 0 40 20">
<rect x="2" y="2" width="14" height="15" rx="2" fill="#d9952a"/><rect x="9" y="9" width="8" height="8" fill="#e8b050"/>
<path d="M23 5 H35 L30.5 10.5 V16 H27.5 V10.5 Z" fill="#a4a4a4"/>
</svg>
<div class="a" style="left:2305px;top:218px;width:175px;height:16px;background:#282828;"></div>
<svg class="a" style="left:2484px;top:216px;" width="70" height="20" viewBox="0 0 70 20">
<path d="M5 13 L11 8 L17 13" fill="none" stroke="#444" stroke-width="2"/><path d="M27 8 L33 13 L39 8" fill="none" stroke="#444" stroke-width="2"/><circle cx="55" cy="10" r="5" fill="none" stroke="#444" stroke-width="2"/>
</svg>
<div class="a" style="left:2265px;top:244px;width:282px;height:467px;background:#2a2a2a;"></div>
<div class="a" style="left:2266px;top:245px;width:280px;height:16px;background:#393939;"></div>
<div class="a t" style="left:2268px;top:245px;height:16px;line-height:16px;font-size:11px;color:#8a8a8a;">Name</div>
<div class="a" style="left:2415px;top:246px;width:1px;height:14px;background:#333;"></div>
<div class="a" style="left:2441px;top:246px;width:1px;height:14px;background:#333;"></div>
<div class="a" style="left:2466px;top:246px;width:1px;height:14px;background:#333;"></div>
<div class="a" style="left:2492px;top:246px;width:1px;height:14px;background:#333;"></div>
<div class="a" style="left:2518px;top:246px;width:1px;height:14px;background:#333;"></div>
<div class="a t" style="left:2279px;top:267px;height:16px;line-height:16px;font-size:11px;color:#8a8a8a;">Layer</div>
<svg class="a" style="left:2415px;top:264px;" width="130" height="22" viewBox="0 0 130 22">
<ellipse cx="13" cy="11" rx="6" ry="3.5" fill="#6a6a6a"/>
<rect x="33" y="11" width="12" height="8" fill="#c8c8c8"/><path d="M36 11 V7 A3 3 0 0 1 42 7" fill="none" stroke="#c8c8c8" stroke-width="2"/>
<rect x="60" y="7" width="5" height="8" fill="#343434"/>
<path d="M82 11 L87 16 L96 6" fill="none" stroke="#c8a428" stroke-width="3.6"/>
<path d="M108 7 L114 9" stroke="#555" stroke-width="2"/><path d="M113 9 L113 18 L116 15 L119 20 L121 19 L119 14 L122 14 Z" fill="#a8a8a8"/>
</svg>
<div class="a" style="left:2264px;top:717px;width:284px;height:39px;background:#3a3a3a;"></div>
<svg class="a" style="left:2266px;top:722px;" width="282" height="36" viewBox="0 0 282 36">
<ellipse cx="15" cy="12" rx="7" ry="3.5" fill="none" stroke="#9a6a24" stroke-width="2.5"/><path d="M8 20 L15 17 L22 20 L15 24 Z" fill="#e0922a"/><rect x="22" y="1" width="6" height="6" fill="#b8b8b8"/>
<path d="M52 10 H62 M56 22 H70" stroke="#474747" stroke-width="2.6"/><rect x="66" y="2" width="5" height="5" fill="#505050"/>
<path d="M94 20 H108" stroke="#4c4c4c" stroke-width="4"/><rect x="106" y="2" width="5" height="5" fill="#505050"/>
<path d="M134 26 L154 6 M136 10 L152 26" stroke="#4c4c4c" stroke-width="3"/>
<path d="M176 16 L184 24 L200 7" fill="none" stroke="#e8962a" stroke-width="5"/><path d="M168 3 H173 M168 3 V8 M206 3 H201 M206 3 V8 M168 31 H173 M168 31 V26 M206 31 H201 M206 31 V26" stroke="#555" stroke-width="1.6" fill="none"/>
<path d="M252 8 H270 M261 4 V8" stroke="#d98c26" stroke-width="2.6"/><rect x="254" y="10" width="14" height="18" rx="2" fill="#d98c26"/><path d="M258.5 12 V26 M263.5 12 V26" stroke="#7a5418" stroke-width="1.6"/>
</svg>
<div class="a" style="left:2262px;top:761px;width:290px;height:2px;background:#2c2c2c;"></div>
<div class="a t" style="left:2268px;top:765.5px;height:16px;line-height:16px;font-size:11px;color:#8a8a8a;">Surfaces</div>
<svg class="a" style="left:2262px;top:782.5px;" width="40" height="20" viewBox="0 0 40 20">
<rect x="2" y="2" width="14" height="15" rx="2" fill="#d9952a"/><rect x="9" y="9" width="8" height="8" fill="#e8b050"/>
<path d="M23 5 H35 L30.5 10.5 V16 H27.5 V10.5 Z" fill="#a4a4a4"/>
</svg>
<div class="a" style="left:2305px;top:784.5px;width:175px;height:16px;background:#282828;"></div>
<svg class="a" style="left:2484px;top:782.5px;" width="70" height="20" viewBox="0 0 70 20">
<path d="M5 13 L11 8 L17 13" fill="none" stroke="#444" stroke-width="2"/><path d="M27 8 L33 13 L39 8" fill="none" stroke="#444" stroke-width="2"/><circle cx="55" cy="10" r="5" fill="none" stroke="#444" stroke-width="2"/>
</svg>
<div class="a" style="left:2265px;top:809px;width:282px;height:468px;background:#2a2a2a;"></div>
<div class="a" style="left:2266px;top:810px;width:280px;height:17px;background:#393939;"></div>
<div class="a t" style="left:2268px;top:811px;height:16px;line-height:16px;font-size:11px;color:#8a8a8a;">Name</div>
<div class="a" style="left:2454px;top:811px;width:1px;height:15px;background:#333;"></div>
<div class="a" style="left:2478px;top:811px;width:1px;height:15px;background:#333;"></div>
<div class="a" style="left:2503px;top:811px;width:1px;height:15px;background:#333;"></div>
<div class="a" style="left:2527px;top:811px;width:1px;height:15px;background:#333;"></div>
<div class="a" style="left:2264px;top:1281px;width:284px;height:39px;background:#3a3a3a;"></div>
<svg class="a" style="left:2266px;top:1284px;" width="282" height="38" viewBox="0 0 282 38">
<path d="M23 6 L36 19 L23 32 L10 19 Z" fill="none" stroke="#494949" stroke-width="2" stroke-dasharray="4 3"/><rect x="20" y="16" width="6" height="6" fill="#494949"/><path d="M4 19 H9" stroke="#494949" stroke-width="2"/>
<path d="M46 24 L54 20 L62 24 L54 28 Z" fill="#494949"/><path d="M64 10 L72 6 M66 28 C72 26 74 22 74 18" stroke="#494949" stroke-width="2.6" fill="none"/>
<path d="M103 5 L116 19 L103 33 L90 19 Z" fill="none" stroke="#494949" stroke-width="2.2"/><path d="M103 8 V30" stroke="#494949" stroke-width="2" stroke-dasharray="3 3"/>
<path d="M132 22 A9 9 0 1 0 146 12" fill="none" stroke="#494949" stroke-width="4"/><path d="M148 4 L158 14 M158 4 L148 14" stroke="#494949" stroke-width="2.4"/>
<path d="M253 9 H269 M261 5 V9" stroke="#494949" stroke-width="2.4"/><rect x="255" y="11" width="12" height="17" rx="2" fill="none" stroke="#494949" stroke-width="2"/><path d="M261 13 V26" stroke="#494949" stroke-width="1.6"/>
</svg>
<div class="a" style="left:2261px;top:1333px;width:11px;height:12px;background:#2e2e2e;"></div>
<svg class="a" style="left:2261px;top:1333px;" width="12" height="12" viewBox="0 0 12 12">
<path d="M3 6 L5.5 9 L9.5 3" fill="none" stroke="#9a9a9a" stroke-width="1.6"/>
</svg>
<div class="a t" style="left:2278px;top:1331.5px;height:16px;line-height:16px;font-size:11px;color:#7c7c7c;">Sync with selection</div>
</div></div>
<div id="fg">
<div class="a" style="left:480px;top:159px;width:259px;height:506px;background:#3e4658;box-shadow:1px 1px 4px rgba(0,0,0,0.55)"></div>
<div class="a" style="left:481px;top:160px;width:257px;height:504px;background:#f9ac0a;"></div>
<div class="a" style="left:484px;top:163px;width:251px;height:498px;background:#5e4e2e;"></div>
<div class="a" style="left:484px;top:660px;width:251px;height:1px;background:#3c3220;"></div>
<div class="a" style="left:484px;top:163px;width:251px;height:39px;background:#675838;"></div>
<div class="a" style="left:484px;top:163px;width:39px;height:39px;background:#5f5032;"></div>
<div class="a" style="left:487px;top:166px;width:32px;height:34px;background:#504226;"></div>
<div class="a" style="left:487px;top:164px;width:32px;height:2px;background:#e8bc28;"></div>
<div class="a" style="left:487px;top:204px;width:32px;height:2px;background:#eba22a;"></div>
<div class="a" style="left:487px;top:244px;width:32px;height:2px;background:#eba22a;"></div>
<div class="a" style="left:487px;top:284px;width:32px;height:2px;background:#eba22a;"></div>
<div class="a" style="left:487px;top:436px;width:32px;height:2px;background:#7e6f4d;"></div>
<div class="a" style="left:484px;top:322px;width:251px;height:1px;background:#514325;"></div>
<div class="a" style="left:484px;top:360px;width:251px;height:1px;background:#514325;"></div>
<div class="a" style="left:484px;top:474px;width:251px;height:1px;background:#514325;"></div>
<div class="a" style="left:484px;top:584px;width:251px;height:1px;background:#514325;"></div>
<div class="a" style="left:484px;top:586px;width:251px;height:1px;background:#514325;"></div>
<div class="a t m" style="left:527.4px;top:174px;color:#fff6e0;letter-spacing:-0.540px">Select</div>
<div class="a t m" style="left:636.3px;top:174px;color:#fff6e0;letter-spacing:-1.333px">(F2)</div>
<div class="a t m" style="left:527.4px;top:214px;color:#d6caaa;letter-spacing:-0.375px">Translation Gizmo</div>
<div class="a t m" style="left:636.3px;top:214px;color:#d6caaa;letter-spacing:-1.333px">(F5)</div>
<div class="a t m" style="left:527.4px;top:254px;color:#d6caaa;letter-spacing:-0.277px">Rotation Gizmo</div>
<div class="a t m" style="left:636.3px;top:254px;color:#d6caaa;letter-spacing:-1.333px">(F6)</div>
<div class="a t m" style="left:527.4px;top:294px;color:#d6caaa;letter-spacing:-0.610px">Scale Gizmo</div>
<div class="a t m" style="left:636.3px;top:294px;color:#d6caaa;letter-spacing:-1.333px">(F7)</div>
<div class="a t m" style="left:527.4px;top:334px;color:#8b7b55;letter-spacing:-0.389px">Properties</div>
<div class="a t m" style="left:636.3px;top:334px;color:#8b7b55;letter-spacing:-1.100px">(P)</div>
<div class="a t m" style="left:527.4px;top:372px;color:#8b7b55;letter-spacing:-0.375px">Hide Selected</div>
<div class="a t m" style="left:636.3px;top:372px;color:#8b7b55;letter-spacing:-1.600px">(R)</div>
<div class="a t m" style="left:527.4px;top:408px;color:#8b7b55;letter-spacing:-0.343px">Hide Unselected</div>
<div class="a t m" style="left:636.3px;top:408px;color:#8b7b55;letter-spacing:-0.400px">(Shift+R)</div>
<div class="a t m" style="left:527.4px;top:446px;color:#8b7b55;letter-spacing:-0.243px">Show All</div>
<div class="a t m" style="left:636.3px;top:446px;color:#8b7b55;letter-spacing:-0.238px">(Ctrl+Shift+R)</div>
<div class="a t m" style="left:527.4px;top:486px;color:#8b7b55;letter-spacing:-0.600px">Freeze Selection</div>
<div class="a t m" style="left:636.3px;top:486px;color:#8b7b55;letter-spacing:-1.600px">(F)</div>
<div class="a t m" style="left:527.4px;top:522px;color:#8b7b55;letter-spacing:-0.675px">Freeze Unselected</div>
<div class="a t m" style="left:636.3px;top:522px;color:#8b7b55;letter-spacing:-0.388px">(Shift+F)</div>
<div class="a t m" style="left:527.4px;top:558px;color:#8b7b55;letter-spacing:-0.336px">Unfreeze All</div>
<div class="a t m" style="left:636.3px;top:558px;color:#8b7b55;letter-spacing:-0.246px">(Ctrl+Shift+F)</div>
<div class="a t m" style="left:527.4px;top:598px;color:#8b7b55;letter-spacing:-0.167px">Undo in Viewport</div>
<div class="a t m" style="left:636.3px;top:598px;color:#8b7b55;letter-spacing:-0.250px">(Shift+Z)</div>
<div class="a t m" style="left:527.4px;top:634px;color:#8b7b55;letter-spacing:-0.287px">Redo in Viewport</div>
<div class="a t m" style="left:636.3px;top:634px;color:#8b7b55;letter-spacing:-0.375px">(Shift+Y)</div>
<style>.m{font-size:12.5px;line-height:16px;height:16px}</style>
<svg class="a" style="left:481px;top:160px" width="257" height="504" viewBox="481 160 257 504">
<path d="M497.7 171.9 L496.9 188.2 L502.1 185.2 L505.7 194.1 L508.3 193.1 L505.3 184.3 L511.2 183.6 Z" fill="#fdeed2"/>
<path d="M501.12 221.95 L501.12 217.60 L497.37 217.60 L503.07 211.70 L508.77 217.60 L505.02 217.60 L505.02 221.95 Z M505.02 221.95 L509.37 221.95 L509.37 218.20 L515.27 223.90 L509.37 229.60 L509.37 225.85 L505.02 225.85 Z M505.02 225.85 L505.02 230.20 L508.77 230.20 L503.07 236.10 L497.37 230.20 L501.12 230.20 L501.12 225.85 Z M501.12 225.85 L496.77 225.85 L496.77 229.60 L490.87 223.90 L496.77 218.20 L496.77 221.95 L501.12 221.95 Z M501.12 221.95 H505.02 V225.85 H501.12 Z" fill="#a99b7b"/>
<path d="M509.23 255.76 A10.2 10.2 0 0 0 492.77 263.09" fill="none" stroke="#a99b7b" stroke-width="4"/>
<path d="M488.7 264.7 L497.4 262.7 L494.4 270.6 Z" fill="#a99b7b"/>
<path d="M497.25 272.26 A10.2 10.2 0 0 0 513.13 264.51" fill="none" stroke="#a99b7b" stroke-width="4"/>
<path d="M517.1 263.3 L508.9 264.6 L512.2 257.4 Z" fill="#a99b7b"/>
<path d="M504.4 302.6 L510.4 296.4" stroke="#a99b7b" stroke-width="4" fill="none"/>
<path d="M515.0 291.9 L506.2 293.1 L514.0 300.1 Z" fill="#a99b7b"/>
<path d="M501.5 305.7 L495.5 311.8" stroke="#a99b7b" stroke-width="4" fill="none"/>
<path d="M490.9 315.9 L492.3 308.4 L499.1 314.8 Z" fill="#a99b7b"/>
<path d="M502.95 330.8 L514.3 342 L502.95 353.1 L491.6 342 Z" fill="none" stroke="#7b6b47" stroke-width="1"/>
<circle cx="502.95" cy="330.8" r="2.4" fill="#7b6b47"/>
<circle cx="514.3" cy="342" r="2.4" fill="#7b6b47"/>
<circle cx="502.95" cy="353.1" r="2.4" fill="#7b6b47"/>
<circle cx="491.6" cy="342" r="2.4" fill="#7b6b47"/>
<path d="M500.7 339.6 C500.5 335.9 506.4 335.7 506.3 339.3 C506.2 341.9 503.35 342.1 503.35 345.0" fill="none" stroke="#7b6b47" stroke-width="2.4"/><rect x="502.1" y="346.3" width="2.5" height="2.5" fill="#7b6b47"/>
<path d="M495.20 375.30 L488.70 382.10 L499.40 392.50" fill="none" stroke="#6b5b39" stroke-width="1.1"/>
<path d="M500.10 377.90 L495.80 382.10 L506.50 392.50 L517.20 382.10 L510.10 375.30" fill="none" stroke="#6b5b39" stroke-width="1.1"/>
<circle cx="488.70" cy="382.10" r="1.9" fill="#6b5b39"/>
<circle cx="499.40" cy="392.50" r="1.9" fill="#6b5b39"/>
<circle cx="506.50" cy="392.50" r="1.9" fill="#6b5b39"/>
<circle cx="517.20" cy="382.10" r="1.9" fill="#6b5b39"/>
<circle cx="495.80" cy="382.10" r="1.9" fill="#6b5b39"/>
<path d="M502.30 382.20 L505.40 386.00 L511.30 379.40" fill="none" stroke="#7b6b47" stroke-width="2.6"/>
<ellipse cx="503.5" cy="371.1" rx="5.5" ry="2.9" fill="none" stroke="#7b6b47" stroke-width="2.3"/>
<path d="M498.66 375.45 L508.73 366.31" stroke="#7b6b47" stroke-width="2.3"/>
<path d="M495.20 411.30 L488.70 418.10 L499.40 428.50" fill="none" stroke="#6b5b39" stroke-width="1.1"/>
<path d="M500.10 413.90 L495.80 418.10 L506.50 428.50 L517.20 418.10 L510.10 411.30" fill="none" stroke="#6b5b39" stroke-width="1.1"/>
<circle cx="488.70" cy="418.10" r="1.9" fill="#6b5b39"/>
<circle cx="499.40" cy="428.50" r="1.9" fill="#6b5b39"/>
<circle cx="506.50" cy="428.50" r="1.9" fill="#6b5b39"/>
<circle cx="517.20" cy="418.10" r="1.9" fill="#6b5b39"/>
<circle cx="495.80" cy="418.10" r="1.9" fill="#6b5b39"/>
<path d="M503.50 415.20 L509.50 421.20 M509.50 415.20 L503.50 421.20" fill="none" stroke="#7b6b47" stroke-width="2.0"/>
<ellipse cx="503.5" cy="407.1" rx="5.5" ry="2.9" fill="none" stroke="#7b6b47" stroke-width="2.3"/>
<path d="M498.66 411.45 L508.73 402.31" stroke="#7b6b47" stroke-width="2.3"/>
<ellipse cx="496.0" cy="450.0" rx="7.0" ry="4.4" fill="none" stroke="#6f5f3d" stroke-width="2.0"/>
<path d="M489.84 456.60 L502.65 442.74" stroke="#6f5f3d" stroke-width="2.0"/>
<path d="M506.2 445.6 C510.5 444.6 513.6 447.0 514.0 450.6" fill="none" stroke="#7b6b47" stroke-width="2.2"/>
<path d="M510.4 450.2 L518.0 449.4 L514.6 455.4 Z" fill="#7b6b47"/>
<path d="M498.9 461.3 C503 453.9 512.5 453.9 516.4 461.3 C512.5 468.6 503 468.6 498.9 461.3 Z" fill="#867753"/>
<circle cx="507.6" cy="461.3" r="3.9" fill="none" stroke="#5e4e2e" stroke-width="1.3"/>
<circle cx="509.3" cy="459.3" r="1.5" fill="#867753"/>
<path d="M495.20 489.70 L488.70 496.50 L499.40 506.90" fill="none" stroke="#6b5b39" stroke-width="1.1"/>
<path d="M500.10 492.30 L495.80 496.50 L506.50 506.90 L517.20 496.50 L510.10 489.70" fill="none" stroke="#6b5b39" stroke-width="1.1"/>
<circle cx="488.70" cy="496.50" r="1.9" fill="#6b5b39"/>
<circle cx="499.40" cy="506.90" r="1.9" fill="#6b5b39"/>
<circle cx="506.50" cy="506.90" r="1.9" fill="#6b5b39"/>
<circle cx="517.20" cy="496.50" r="1.9" fill="#6b5b39"/>
<circle cx="495.80" cy="496.50" r="1.9" fill="#6b5b39"/>
<path d="M502.30 496.60 L505.40 500.40 L511.30 493.80" fill="none" stroke="#7b6b47" stroke-width="2.6"/>
<rect x="498.9" y="484.4" width="8.2" height="5.3" fill="#7b6b47"/>
<path d="M500.6 484.59999999999997 V482.29999999999995 A2.4 2.4 0 0 1 505.4 482.29999999999995 V484.59999999999997" fill="none" stroke="#7b6b47" stroke-width="1.6"/>
<rect x="502.85" y="485.4" width="1" height="3" fill="#5e4e2e"/>
<path d="M495.20 525.70 L488.70 532.50 L499.40 542.90" fill="none" stroke="#6b5b39" stroke-width="1.1"/>
<path d="M500.10 528.30 L495.80 532.50 L506.50 542.90 L517.20 532.50 L510.10 525.70" fill="none" stroke="#6b5b39" stroke-width="1.1"/>
<circle cx="488.70" cy="532.50" r="1.9" fill="#6b5b39"/>
<circle cx="499.40" cy="542.90" r="1.9" fill="#6b5b39"/>
<circle cx="506.50" cy="542.90" r="1.9" fill="#6b5b39"/>
<circle cx="517.20" cy="532.50" r="1.9" fill="#6b5b39"/>
<circle cx="495.80" cy="532.50" r="1.9" fill="#6b5b39"/>
<path d="M503.50 529.60 L509.50 535.60 M509.50 529.60 L503.50 535.60" fill="none" stroke="#7b6b47" stroke-width="2.0"/>
<rect x="498.9" y="520.4" width="8.2" height="5.3" fill="#7b6b47"/>
<path d="M500.6 520.6 V518.3 A2.4 2.4 0 0 1 505.4 518.3 V520.6" fill="none" stroke="#7b6b47" stroke-width="1.6"/>
<rect x="502.85" y="521.4" width="1" height="3" fill="#5e4e2e"/>
<path d="M495.20 561.70 L488.70 568.50 L499.40 578.90" fill="none" stroke="#6b5b39" stroke-width="1.1"/>
<path d="M500.10 564.30 L495.80 568.50 L506.50 578.90 L517.20 568.50 L510.10 561.70" fill="none" stroke="#6b5b39" stroke-width="1.1"/>
<circle cx="488.70" cy="568.50" r="1.9" fill="#6b5b39"/>
<circle cx="499.40" cy="578.90" r="1.9" fill="#6b5b39"/>
<circle cx="506.50" cy="578.90" r="1.9" fill="#6b5b39"/>
<circle cx="517.20" cy="568.50" r="1.9" fill="#6b5b39"/>
<circle cx="495.80" cy="568.50" r="1.9" fill="#6b5b39"/>
<rect x="501.70" y="567.90" width="2" height="2" fill="#7b6b47"/>
<rect x="505.40" y="567.90" width="2" height="2" fill="#7b6b47"/>
<rect x="509.10" y="567.90" width="2" height="2" fill="#7b6b47"/>
<rect x="498.9" y="556.4" width="8.2" height="5.3" fill="#7b6b47"/>
<path d="M500.6 556.6 V553.9 A2.4 2.4 0 0 1 505.4 553.9 V555.1" fill="none" stroke="#7b6b47" stroke-width="1.6"/>
<rect x="502.85" y="557.4" width="1" height="3" fill="#5e4e2e"/>
<rect x="488.7" y="594.5" width="28.8" height="23" fill="none" stroke="#695939" stroke-width="1"/>
<rect x="489.2" y="595" width="27.8" height="2.6" fill="#695939"/>
<rect x="514.3" y="595.4" width="1.6" height="1.6" fill="#514325"/>
<path d="M491.8 607.8 L500.6 602.4 L500.2 605.6 C507.0 606.0 511.6 605.6 515.0 602.8 C512.8 609.2 507.0 611.4 499.9 611.2 L499.6 614.1 Z" fill="#7b6b47"/>
<rect x="488.7" y="630.5" width="28.8" height="23" fill="none" stroke="#695939" stroke-width="1"/>
<rect x="489.2" y="631" width="27.8" height="2.6" fill="#695939"/>
<rect x="514.3" y="631.4" width="1.6" height="1.6" fill="#514325"/>
<path d="M514.3 643.3 L506.4 637.2 L506.0 640.5 C499.6 640.3 494.3 642.6 490.8 648.4 C495.4 645.6 500.0 645.2 505.6 645.9 L505.2 649.1 Z" fill="#7b6b47"/>
</svg>
<svg class="a" style="left:690px;top:171px" width="16" height="22" viewBox="0 0 16 22">
<path d="M2.1 2.0 L2.1 17.6 L5.9 14.3 L8.6 20.4 L11.0 19.3 L8.3 13.3 L13.3 13.3 Z" fill="#fdeed2" stroke="#1c160c" stroke-width="1.1" stroke-linejoin="miter"/>
</svg>
</div>
</body></html>
